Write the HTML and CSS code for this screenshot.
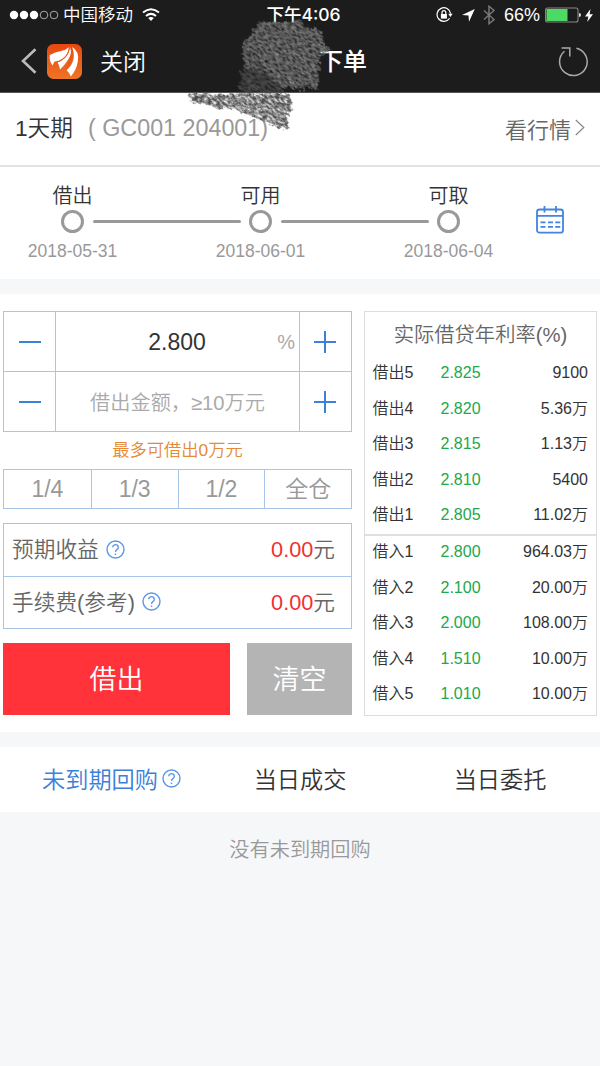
FILE: index.html
```html
<!DOCTYPE html>
<html lang="zh-CN">
<head>
  <meta charset="UTF-8">
  <meta name="viewport" content="width=device-width, initial-scale=1.0">
  <title>下单</title>
  <link rel="stylesheet" href="styles.css">
</head>
<body>

  <header class="header">
    <div class="status-bar">
      <div class="status-left">
        <svg class="signal" width="50" height="10" viewBox="0 0 50 10">
          <g fill="#fff"><circle cx="5" cy="5" r="4.2"/><circle cx="15" cy="5" r="4.2"/><circle cx="25" cy="5" r="4.2"/></g>
          <g fill="none" stroke="#ccc" stroke-width=".8"><circle cx="35" cy="5" r="3.8"/><circle cx="45" cy="5" r="3.8"/></g>
        </svg>
        <span class="carrier">中国移动</span>
        <svg width="18" height="14" viewBox="0 0 18 14" fill="none" stroke="#fff" stroke-width="2">
          <path d="M1 4.6Q9-2 17 4.6M4 8Q9 3.8 14 8"/>
          <path d="M9 13L6.2 10Q9 7.8 11.8 10z" fill="#fff" stroke="none"/>
        </svg>
      </div>
      <div class="status-time">下午4:06</div>
      <div class="status-right">
        <svg width="17" height="16" viewBox="0 0 17 16" fill="none" stroke="#fff" stroke-width="1.2">
          <path d="M13.6 11.2A6.8 6.8 0 1 1 14.6 6.6"/>
          <path d="M12.2 6.8h4.4l-2.2 3.2z" fill="#fff" stroke="none"/>
          <rect x="4.9" y="7" width="6" height="4.6" fill="#fff" stroke="none"/>
          <path d="M6 7.3V5.6a1.9 1.9 0 0 1 3.8 0v1.7"/>
        </svg>
        <svg class="arrow" width="13" height="13" viewBox="0 0 13 13"><path d="M12.8 0L7 12.8 6.5 6.4 0 6z" fill="#fff"/></svg>
        <svg class="bluetooth" width="12" height="20" viewBox="0 0 12 20" fill="none" stroke="#777" stroke-width="1.5"><path d="M1 5.5l10 9-5 4.2V1.3l5 4.2-10 9"/></svg>
        <span class="percent">66%</span>
        <svg width="36" height="16" viewBox="0 0 36 16">
          <rect x=".6" y="1" width="32.4" height="14" rx="2" fill="none" stroke="#888" stroke-width="1.1"/>
          <rect x="1.5" y="2" width="21" height="12" fill="#4cd964"/>
          <path d="M34 6q2 0 2 2t-2 2z" fill="#ddd"/>
        </svg>
        <svg class="bolt" width="8" height="13" viewBox="0 0 8 13"><path d="M5.5 0L0 7.4h3.4L2.2 13 8 5.2H4.6z" fill="#fff"/></svg>
      </div>
    </div>

    <nav class="nav">
      <svg class="back" width="16" height="26" viewBox="0 0 16 26" fill="none" stroke="#bbb" stroke-width="2.6"><path d="M14.5 1.2L2 13l12.5 11.8"/></svg>
      <svg class="logo" width="35" height="35" viewBox="0 0 35 35">
        <defs>
          <linearGradient id="logoBg" x1="0" y1="0" x2="0" y2="1"><stop offset="0" stop-color="#e8470f"/><stop offset="1" stop-color="#ef7426"/></linearGradient>
        </defs>
        <rect width="35" height="35" rx="6.5" fill="url(#logoBg)"/>
        <g fill="#fff">
          <path d="M2.8 11Q8 8 14 7 19 6 22 3.3 21.5 10 16 14.5 13 17 7.5 17.5L5.5 21.5Q2 17 2.8 11z"/>
          <path d="M23 3Q25.5 9 21.5 15 19 19.5 13 25.5 12.5 21.5 10.5 18.5 17 16 20 11.5 22.5 8 23 3z"/>
          <path d="M25 3Q32.5 7 30.8 17.5 29.5 26 23.8 32.5 22.5 28.5 19.5 26.2 25 22 26.5 15 27.5 8.5 25 3z"/>
        </g>
        <g fill="none" stroke="#ea5518" stroke-width=".9"><path d="M22.5 3.5Q21.5 14 9.5 18.3M24 3.5Q27.5 14 18.5 26.5"/></g>
      </svg>
      <span class="close">关闭</span>
      <h1 class="nav-title">下单</h1>
      <svg class="refresh" width="31" height="31" viewBox="0 0 31 31" fill="none" stroke="#aaa" stroke-width="1.5"><path d="M18.4 2.3A13.8 13.8 0 1 1 6.500 5.200M3.600 2h8.200v8.500"/></svg>
    </nav>
  </header>

  <!-- chalk scribble over the title, grain runs diagonally -->
  <svg class="scribble" width="200" height="140" viewBox="0 0 200 140">
    <defs>
      <filter id="chalk" filterUnits="userSpaceOnUse" x="-20" y="-120" width="240" height="260" color-interpolation-filters="sRGB">
        <feTurbulence type="fractalNoise" baseFrequency=".22 .5" numOctaves="4" seed="7" result="grain"/>
        <feColorMatrix in="grain" values="0 0 0 0 0  0 0 0 0 0  0 0 0 0 0  2.2 0 0 0 -.42" result="mask"/>
        <feTurbulence type="fractalNoise" baseFrequency=".12 .3" numOctaves="3" seed="4" result="warp"/>
        <feDisplacementMap in="SourceGraphic" in2="warp" scale="10" xChannelSelector="R" yChannelSelector="G" result="rough"/>
        <feComposite in="rough" in2="mask" operator="in"/>
        <feGaussianBlur stdDeviation=".35"/>
      </filter>
    </defs>
    <g transform="rotate(32)" filter="url(#chalk)">
      <g transform="rotate(-32)">
        <path d="M78 21l27 1 8-2 30 12 1 13 9 4-13 7-1 16-1 17-20-1-38 0-16-20-1-22z" fill="#727272"/>
        <path d="M61 70l19 0 20 16 3 7H60z" fill="#484848"/>
        <path d="M7 94h104l-1 8 5 10-7 3 1 15-13-3-36-16-16-3-6 1-13-6-15 0z" fill="#4a4a4a"/>
        <path d="M59 53h18M61 66h27M70 57l20 18M62 74l18 17" fill="none" stroke="#555" stroke-width="2"/>
        <path d="M81 33l56 35M84 48l50 31M107 25l32 20M75 59l50 33M60 97l48 20M50 103l54 22" fill="none" stroke="#909090" stroke-width="1.2"/>
      </g>
    </g>
  </svg>

  <section class="product">
    <span class="term">1天期</span>
    <span class="code">( GC001 204001)</span>
    <a class="market">看行情
      <svg width="10" height="17" viewBox="0 0 10 17" fill="none" stroke="#888" stroke-width="1.2"><path d="M.8 1L8.8 8.5.8 16"/></svg>
    </a>
  </section>

  <section class="timeline">
    <div class="step"><span>借出</span><i class="dot"></i><time>2018-05-31</time></div>
    <div class="line"></div>
    <div class="step"><span>可用</span><i class="dot"></i><time>2018-06-01</time></div>
    <div class="line"></div>
    <div class="step"><span>可取</span><i class="dot"></i><time>2018-06-04</time></div>
    <svg class="calendar" width="28" height="28" viewBox="0 0 28 28" fill="none" stroke="#4384dd" stroke-width="1.8">
      <rect x="1" y="3.5" width="26" height="23.2" rx="2.5"/>
      <path d="M1 9.8h26M8.5 0v6.5M20 0v6.5"/>
      <path d="M4.5 16.3h5M12 16.3h5M19.3 16.3h5M4.5 20.8h5M12 20.8h5M19.3 20.8h5"/>
    </svg>
  </section>

  <main class="trade">
    <div class="order">
      <div class="stepper">
        <button class="minus"></button>
        <div class="field value">2.800<span class="unit">%</span></div>
        <button class="plus"></button>
        <button class="minus"></button>
        <div class="field placeholder">借出金额，≥10万元</div>
        <button class="plus"></button>
      </div>
      <p class="limit">最多可借出0万元</p>
      <div class="ratios">
        <button>1/4</button>
        <button>1/3</button>
        <button>1/2</button>
        <button>全仓</button>
      </div>
      <div class="summary">
        <div class="summary-row"><span>预期收益</span>
          <svg class="help" width="19" height="19" viewBox="0 0 19 19"><circle cx="9.5" cy="9.5" r="8.5"/><path d="M6.7 7.3a2.8 2.6 0 1 1 4.4 2.1Q9.5 10.5 9.5 12M9.5 13.4v1.5"/></svg>
          <span class="amount"><b>0.00</b>元</span>
        </div>
        <div class="summary-row"><span>手续费(参考)</span>
          <svg class="help" width="19" height="19" viewBox="0 0 19 19"><circle cx="9.5" cy="9.5" r="8.5"/><path d="M6.7 7.3a2.8 2.6 0 1 1 4.4 2.1Q9.5 10.5 9.5 12M9.5 13.4v1.5"/></svg>
          <span class="amount"><b>0.00</b>元</span>
        </div>
      </div>
      <div class="actions">
        <button class="lend">借出</button>
        <button class="clear">清空</button>
      </div>
    </div>

    <div class="quotes">
      <h2>实际借贷年利率(%)</h2>
      <div class="quote-group">
        <div class="quote"><span>借出5</span><em>2.825</em><span>9100</span></div>
        <div class="quote"><span>借出4</span><em>2.820</em><span>5.36万</span></div>
        <div class="quote"><span>借出3</span><em>2.815</em><span>1.13万</span></div>
        <div class="quote"><span>借出2</span><em>2.810</em><span>5400</span></div>
        <div class="quote"><span>借出1</span><em>2.805</em><span>11.02万</span></div>
      </div>
      <div class="quote-group">
        <div class="quote"><span>借入1</span><em>2.800</em><span>964.03万</span></div>
        <div class="quote"><span>借入2</span><em>2.100</em><span>20.00万</span></div>
        <div class="quote"><span>借入3</span><em>2.000</em><span>108.00万</span></div>
        <div class="quote"><span>借入4</span><em>1.510</em><span>10.00万</span></div>
        <div class="quote"><span>借入5</span><em>1.010</em><span>10.00万</span></div>
      </div>
    </div>
  </main>

  <div class="tabs">
    <div class="tab active">未到期回购
      <svg class="help" width="19" height="19" viewBox="0 0 19 19"><circle cx="9.5" cy="9.5" r="8.5"/><path d="M6.7 7.3a2.8 2.6 0 1 1 4.4 2.1Q9.5 10.5 9.5 12M9.5 13.4v1.5"/></svg>
    </div>
    <div class="tab">当日成交</div>
    <div class="tab">当日委托</div>
  </div>
  <p class="empty">没有未到期回购</p>

</body>
</html>
```
FILE: styles.css
```css
* {
  box-sizing: border-box;
}

body {
  margin: 0;
  position: relative;
  height: 1066px;
  overflow: hidden;
  background-color: #f6f7f9;
  color: #333;
  font-family: "Liberation Sans", "Noto Sans CJK SC DemiLight", "Noto Sans CJK SC", sans-serif;
  font-weight: 350;
}

svg {
  display: block;
  flex: none;
}

button {
  padding: 0;
  border: none;
  background: none;
  font: inherit;
  color: inherit;
}

.header {
  height: 93px;
  background-color: #1c1c1c;
  border-bottom: 1px solid #555;
  color: #fff;
}

.status-bar {
  height: 30px;
  display: grid;
  grid-template-columns: 1fr auto 1fr;
  align-items: center;
  padding: 0 7px 0 9px;
}

.status-left,
.status-right {
  display: flex;
  align-items: center;
}

.carrier {
  font-size: 17.5px;
  line-height: 28px;
  margin: 0 9px 0 4px;
}

.status-time {
  font-family: Inter, "Noto Sans CJK SC", sans-serif;
  font-size: 17.5px;
  line-height: 30px;
  font-weight: 500;
  padding-left: 5px;
}

.status-right {
  justify-content: flex-end;
}

.arrow {
  margin-left: 9px;
}

.bluetooth {
  margin-left: 8px;
}

.percent {
  font-size: 18px;
  margin: 0 5px 0 9px;
}

.bolt {
  margin-left: 4px;
}

.nav {
  height: 62px;
  display: flex;
  align-items: center;
  padding: 0 11px 0 21px;
}

.logo {
  margin-left: 10px;
}

.close {
  font-size: 23px;
  margin-left: 18px;
  padding-bottom: 3px;
}

.nav-title {
  margin: 0 0 0 173px;
  padding-bottom: 2px;
  font-family: "Noto Sans CJK SC", sans-serif;
  font-size: 24px;
  line-height: 30px;
  font-weight: 500;
}

.refresh {
  margin-left: auto;
}

.scribble {
  position: absolute;
  top: 0;
  left: 180px;
}

.product {
  height: 74px;
  display: flex;
  align-items: center;
  padding: 0 15px 2px;
  background-color: #fff;
  border-bottom: 2px solid #e2e2e2;
  font-size: 22px;
}

.term {
  font-size: 22.7px;
  padding-bottom: 4px;
}

.code {
  margin-left: 15px;
  color: #999;
  font-size: 23.3px;
}

.market {
  display: flex;
  align-items: center;
  gap: 4px;
  height: 40px;
  margin: 0 0 1px auto;
  color: #666;
}

.timeline {
  height: 112px;
  display: flex;
  padding: 14px 0 0 22px;
  background-color: #fff;
}

.step {
  width: 101px;
  display: flex;
  flex-direction: column;
  align-items: center;
  font-size: 20px;
  line-height: 30px;
}

.dot {
  width: 23px;
  height: 23px;
  margin: -1px 0 8px;
  border: 3px solid #999;
  border-radius: 50%;
}

.step time {
  font-size: 17.5px;
  line-height: 20px;
  color: #999;
}

.line {
  width: 148px;
  height: 3px;
  margin: 39px -30.5px 0;
  border-radius: 2px;
  background-color: #999;
}

.calendar {
  margin: 25px 0 0 37px;
}

.trade {
  display: flex;
  gap: 12px;
  height: 453px;
  padding: 17px 3px;
  background-color: #fff;
  border-top: 15px solid #f6f7f9;
}

.order {
  width: 349px;
}

.stepper {
  display: grid;
  grid-template-columns: 51px 243px 51px;
  grid-template-rows: 59px 59px;
  gap: 1px;
  height: 121px;
  border: 1px solid #a9c6e8;
  background-color: #a9c6e8;
}

.stepper > * {
  display: flex;
  align-items: center;
  justify-content: center;
  background-color: #fff;
}

.minus::before,
.plus::before {
  content: "";
  width: 22px;
  height: 22px;
  background: linear-gradient(#3b80da, #3b80da) center / 22px 2px no-repeat;
}

.plus {
  padding-right: 2px;
}

.plus::before {
  background: linear-gradient(#3b80da, #3b80da) center / 22px 2px no-repeat,
    linear-gradient(#3b80da, #3b80da) center / 2px 22px no-repeat;
}

.field {
  position: relative;
  font-size: 23px;
}

.field.value {
  padding: 2px 1px 0 0;
}

.field.placeholder {
  font-size: 20.2px;
  color: #aaa;
}

.unit {
  position: absolute;
  right: 4px;
  font-size: 20px;
  color: #aaa;
}

.limit {
  margin: 0;
  height: 37px;
  line-height: 37px;
  font-size: 17.3px;
  text-align: center;
  color: #e58a35;
}

.ratios {
  display: grid;
  grid-template-columns: repeat(4, 1fr);
  height: 40px;
  border: 1px solid #a9c6e8;
  font-size: 23px;
  line-height: 36px;
  color: #999;
}

.ratios button + button {
  border-left: 1px solid #a9c6e8;
}

.summary {
  height: 106px;
  margin-top: 14px;
  border: 1px solid #a9c6e8;
}

.summary-row {
  height: 52px;
  display: flex;
  align-items: center;
  padding: 0 16px 2px 8px;
  font-size: 21.7px;
  color: #666;
}

.summary-row > span {
  padding-bottom: 3px;
}

.summary-row + .summary-row {
  border-top: 1px solid #a9c6e8;
}

.help {
  margin-left: 7px;
  fill: none;
  stroke: #5b97e5;
  stroke-width: 1.4;
}

.summary-row > .amount {
  margin-left: auto;
}

.amount b {
  font-weight: 400;
  color: #f23030;
}

.actions {
  display: flex;
  justify-content: space-between;
  height: 72px;
  margin-top: 14px;
  font-size: 27px;
  color: #fff;
}

.actions button {
  padding-bottom: 4px;
}

.lend {
  width: 227px;
  background-color: #ff3339;
}

.clear {
  width: 105px;
  background-color: #b4b4b4;
}

.quotes {
  width: 233px;
  height: 405px;
  border: 1px solid #ddd;
}

.quotes h2 {
  margin: 0;
  height: 43px;
  line-height: 47px;
  font-size: 20.3px;
  font-weight: 350;
  text-align: center;
  color: #666;
}

.quote-group + .quote-group {
  margin-top: 1px;
  border-top: 2px solid #e0e0e0;
}

.quote-group + .quote-group .quote:first-child {
  margin-top: -1.5px;
}

.quote {
  display: grid;
  grid-template-columns: 68px 60px 1fr;
  height: 35.5px;
  line-height: 35.5px;
  padding: 0 8px 0 7.5px;
  font-size: 16px;
}

.quote em {
  font-style: normal;
  color: #21a84b;
}

.quote span:last-child {
  text-align: right;
}

.tabs {
  display: flex;
  height: 80px;
  border-top: 15px solid #f6f7f9;
  background-color: #fff;
}

.tab {
  width: 200px;
  display: flex;
  align-items: center;
  justify-content: center;
  padding-bottom: 3px;
  font-size: 23.2px;
}

.tab.active {
  padding-left: 23px;
  color: #3b80da;
}

.tab .help {
  margin-left: 4px;
}

.empty {
  margin: 23px 0 0;
  font-size: 20.2px;
  line-height: 30px;
  text-align: center;
  color: #999;
}
```
